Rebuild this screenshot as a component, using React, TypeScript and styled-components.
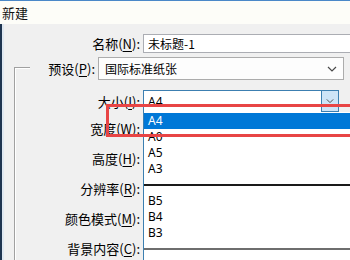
import styled, { createGlobalStyle } from "styled-components";

const GlobalStyle = createGlobalStyle`
  html, body {
    margin: 0;
    padding: 0;
    background: #f0f0f0;
  }
  body {
    font-family: "Noto Sans CJK SC", "Noto Sans", sans-serif;
  }
`;

const sizes = [
  { name: "A4", selected: true },
  { name: "A0" },
  { name: "A5" },
  { name: "A3" },
  { name: "-dark" },
  { name: "B5" },
  { name: "B4" },
  { name: "B3" },
  { name: "-gray" },
];

const labels: [string, string, string][] = [
  ["宽度(", "W", "):"],
  ["高度(", "H", "):"],
  ["分辨率(", "R", "):"],
  ["颜色模式(", "M", "):"],
  ["背景内容(", "C", "):"],
];

const Chevron = () => (
  <svg width="10" height="6" viewBox="0 0 10 6">
    <polyline points="1,1 5,5 9,1" fill="none" stroke="#4a4a4a" strokeWidth="1.2" />
  </svg>
);

export default function App() {
  return (
    <Window>
      <GlobalStyle />
      <TitleBar>新建</TitleBar>
      <Body>
        <Row $label={138}>
          <Label>
            名称(<u>N</u>):
          </Label>
          <TextInput>未标题-1</TextInput>
        </Row>
        <Group>
          <PresetRow>
            <Label>
              预设(<u>P</u>):
            </Label>
            <Select>
              国际标准纸张
              <Chevron />
            </Select>
          </PresetRow>
          <SizeRows>
            <Row $label={126}>
              <Label>
                大小(<u>I</u>):
              </Label>
              <Combo>
                A4
                <ComboButton>
                  <Chevron />
                </ComboButton>
                <DropList>
                  {sizes.map((s) =>
                    s.name === "-dark" ? (
                      <Divider key={s.name} $color="#1a1a1a" />
                    ) : s.name === "-gray" ? (
                      <Divider key={s.name} $color="#6e6e6e" />
                    ) : (
                      <Item key={s.name} $selected={s.selected}>
                        {s.name}
                      </Item>
                    )
                  )}
                </DropList>
              </Combo>
            </Row>
            {labels.map(([a, k, b]) => (
              <Row key={k} $label={126}>
                <Label>
                  {a}
                  <u>{k}</u>
                  {b}
                </Label>
              </Row>
            ))}
          </SizeRows>
        </Group>
      </Body>
      <Highlight />
    </Window>
  );
}

const Window = styled.div`
  position: relative;
  width: 350px;
  height: 260px;
  overflow: hidden;
  background: #f0f0f0;
  display: flex;
  flex-direction: column;
`;

const TitleBar = styled.div`
  height: 23px;
  border-top: 1px solid #4a88c8;
  background: #fdfdf8;
  padding-left: 2px;
  display: flex;
  align-items: center;
  font-size: 13px;
  color: #111;
`;

const Body = styled.div`
  flex: 1;
  border-left: 2px solid #1f3550;
  box-shadow: inset 2px 0 0 #dfe8f1;
  padding-top: 10px;
  display: flex;
  flex-direction: column;
`;

const Row = styled.div<{ $label: number }>`
  display: grid;
  grid-template-columns: ${(p) => p.$label}px auto;
  column-gap: 3px;
  align-items: center;
  height: 22px;
  &:first-child {
    height: 19px;
  }
`;

const Label = styled.div`
  font-size: 13px;
  color: #000;
  text-align: right;
  white-space: nowrap;
  u {
    text-underline-offset: 2px;
  }
`;

const TextInput = styled.div`
  width: 220px;
  height: 19px;
  box-sizing: border-box;
  border: 1px solid #abadb3;
  border-right: none;
  background: #fff;
  font-size: 12px;
  padding-left: 4px;
  display: flex;
  align-items: center;
`;

const Group = styled.div`
  position: relative;
  margin: 4px 0 0 12px;
  display: flex;
  flex-direction: column;
  &::before {
    content: "";
    position: absolute;
    top: 10px;
    left: 0;
    bottom: -10px;
    width: 15px;
    border-top: 1px solid #a0a0a0;
    border-left: 1px solid #a0a0a0;
    box-shadow: inset 1px 1px 0 #fff;
  }
`;

const PresetRow = styled.div`
  position: relative;
  display: grid;
  grid-template-columns: 81px 246px;
  column-gap: 3px;
  align-items: center;
  height: 23px;
`;

const Select = styled.div`
  height: 23px;
  box-sizing: border-box;
  border: 1px solid #acacac;
  background: #fdfdfd;
  font-size: 12px;
  padding: 0 6px 0 6px;
  display: flex;
  align-items: center;
  justify-content: space-between;
`;

const SizeRows = styled.div`
  margin-top: 10px;
  display: flex;
  flex-direction: column;
  gap: 8px;
`;

const Combo = styled.div`
  position: relative;
  width: 196px;
  height: 22px;
  box-sizing: border-box;
  border: 1px solid #3c7fb1;
  border-bottom: none;
  background: #fff;
  font-family: "Noto Sans", sans-serif;
  font-size: 12px;
  padding-left: 4px;
  display: flex;
  align-items: center;
`;

const ComboButton = styled.div`
  position: absolute;
  right: -1px;
  top: -1px;
  bottom: 0;
  width: 16px;
  border: 1px solid #3c7fb1;
  background: #cde4f7;
  display: flex;
  align-items: center;
  justify-content: center;
  svg {
    width: 8px;
  }
`;

const DropList = styled.div`
  position: absolute;
  top: 100%;
  left: -1px;
  width: 220px;
  height: 160px;
  padding-top: 1px;
  border-left: 1px solid #3c7fb1;
  background: #fff;
  display: flex;
  flex-direction: column;
`;

const Item = styled.div<{ $selected?: boolean }>`
  height: 16px;
  line-height: 16px;
  padding-left: 4px;
  font-family: "Noto Sans", sans-serif;
  font-size: 12px;
  background: ${(p) => (p.$selected ? "#0078d7" : "transparent")};
  color: ${(p) => (p.$selected ? "#fff" : "#000")};
`;

const Divider = styled.div<{ $color: string }>`
  height: 2px;
  margin: 7px 0;
  background: ${(p) => p.$color};
`;

const Highlight = styled.div`
  position: absolute;
  top: 104px;
  left: 106px;
  width: 260px;
  height: 33px;
  box-sizing: border-box;
  border: 3px solid #e84545;
  pointer-events: none;
`;
